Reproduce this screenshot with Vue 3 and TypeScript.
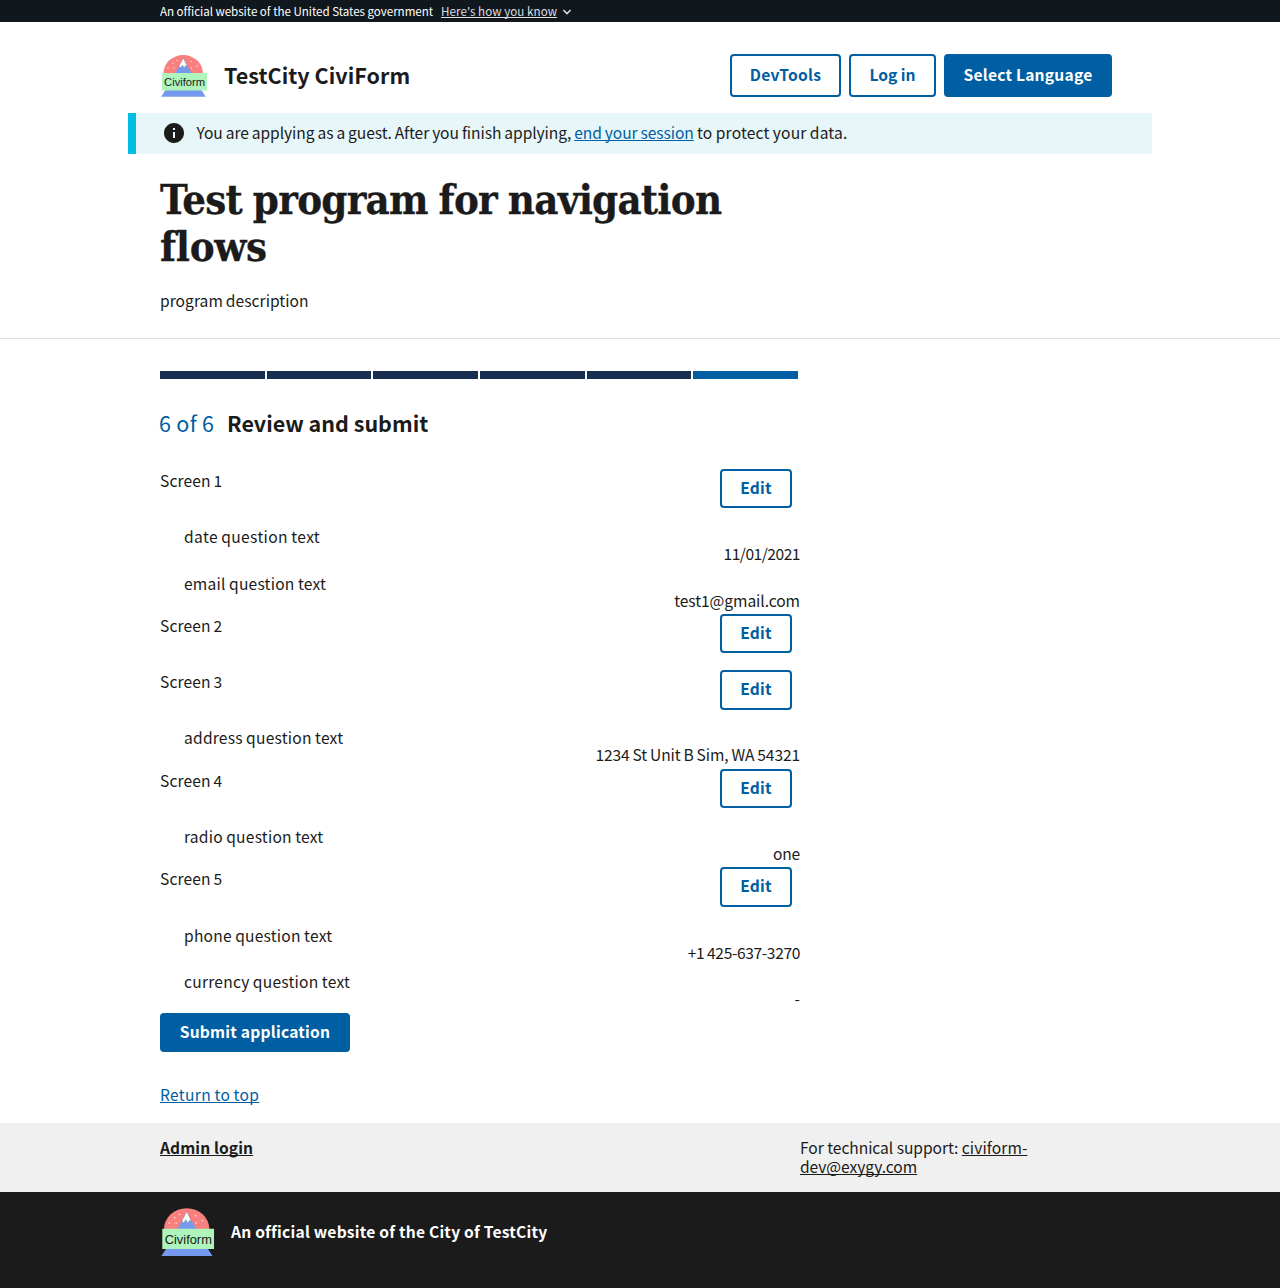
<script setup lang="ts">
import { h } from 'vue'

interface Question {
  text: string
  answer: string
  textTracking: number
  answerTracking: number
}
interface Block {
  name: string
  questions: Question[]
}

const blocks: Block[] = [
  {
    name: 'Screen 1',
    questions: [
      { text: 'date question text', answer: '11/01/2021', textTracking: 0.34, answerTracking: -0.5 },
      { text: 'email question text', answer: 'test1@gmail.com', textTracking: 0.22, answerTracking: -0.07 },
    ],
  },
  { name: 'Screen 2', questions: [] },
  {
    name: 'Screen 3',
    questions: [
      { text: 'address question text', answer: '1234 St Unit B Sim, WA 54321', textTracking: 0.22, answerTracking: -0.12 },
    ],
  },
  {
    name: 'Screen 4',
    questions: [{ text: 'radio question text', answer: 'one', textTracking: 0.22, answerTracking: -0.2 }],
  },
  {
    name: 'Screen 5',
    questions: [
      { text: 'phone question text', answer: '+1 425-637-3270', textTracking: 0.22, answerTracking: -0.37 },
      { text: 'currency question text', answer: '-', textTracking: 0.23, answerTracking: 0 },
    ],
  },
]
const steps = 6

const snow = [
  [12.7, 9.2], [17, 6.5], [8, 14], [14, 14], [31, 7.5], [31.5, 14], [37, 12],
]

// Snow globe mark, shared by the page header and the identifier.
const CiviformLogo = () =>
  h('svg', { viewBox: '0 0 48 44' }, [
    h('path', { d: 'M3.5 19.2A19.7 18.2 0 0 1 42.9 19.2Z', fill: '#fa8080' }),
    h('path', { d: 'M23.2 4.2 31.6 19.2H15.2Z', fill: '#7499ee' }),
    h('path', {
      d: 'M23.2 3.9 27.5 12.6 25.5 11.5 24.2 14.4 22.5 11 20.7 13.8 19 12.2Z',
      fill: '#fff', stroke: '#777', 'stroke-width': 0.35,
    }),
    ...snow.map(([cx, cy]) => h('circle', { cx, cy, r: 0.7, fill: '#ffe0e0' })),
    h('path', { d: 'M5.5 36H41.5L45.7 42.7H1.2Z', fill: '#7499ee' }),
    h('path', { d: 'M2 19H47V36.5H2Z', fill: '#aef4bb' }),
    h('text', {
      x: 4.1, y: 32, textLength: 41, lengthAdjust: 'spacingAndGlyphs',
      'font-family': '"Liberation Sans", sans-serif', 'font-size': 11,
      'font-weight': 400, 'letter-spacing': 0, fill: '#1b1b1b',
    }, 'Civiform'),
  ])
</script>

<template>
  <div class="page">
    <div class="banner">
      <div class="container banner-inner">
        <span class="official">An official website of the United States government</span>
        <a class="how">Here's how you know</a>
        <svg class="chevron" width="10" height="6" viewBox="0 0 10 6"><path d="M1.4 1 5 4.6 8.6 1" fill="none" stroke="#dcdee0" stroke-width="1.5" /></svg>
      </div>
    </div>

    <header class="container header">
      <CiviformLogo class="logo" />
      <span class="brand">TestCity CiviForm</span>
      <nav class="actions">
        <button class="btn outline dev">DevTools</button>
        <button class="btn outline log">Log in</button>
        <button class="btn lang">Select Language</button>
      </nav>
    </header>

    <div class="alert">
      <svg width="24" height="24" viewBox="0 0 24 24"><path fill="#1b1b1b" d="M12 2C6.48 2 2 6.48 2 12s4.48 10 10 10 10-4.48 10-10S17.52 2 12 2zm1 15h-2v-6h2v6zm0-8h-2V7h2v2z" /></svg>
      <p>You are applying as a guest. After you finish applying, <a class="link">end your session</a><span class="protect"> to protect your data.</span></p>
    </div>

    <section class="intro">
      <div class="container">
        <h1>Test program for navigation<br><span class="last">flows</span></h1>
        <p class="description">program description</p>
      </div>
    </section>

    <main class="container main">
      <div class="progress">
        <div v-for="n in steps" :key="n" class="segment" :class="{ current: n === steps }"></div>
      </div>
      <h2><span class="count">6 of 6</span><span class="step">Review and submit</span></h2>

      <section v-for="block in blocks" :key="block.name" class="block">
        <div class="block-head">
          <span class="block-name">{{ block.name }}</span>
          <button class="btn outline edit">Edit</button>
        </div>
        <div v-for="q in block.questions" :key="q.text" class="question">
          <div class="question-text" :style="{ letterSpacing: q.textTracking + 'px' }">{{ q.text }}</div>
          <div class="answer" :style="{ letterSpacing: q.answerTracking + 'px' }">{{ q.answer }}</div>
        </div>
      </section>

      <button class="btn submit">Submit application</button>
      <div class="top-row"><a class="link">Return to top</a></div>
    </main>

    <footer>
      <div class="support">
        <div class="container support-inner">
          <div class="admin"><a>Admin login</a></div>
          <p class="contact">For technical support: <a><span class="mail-start">civiform-</span><br>dev@exygy.com</a></p>
        </div>
      </div>
      <div class="identifier">
        <div class="container identifier-inner">
          <CiviformLogo class="logo-lg" />
          <span>An official website of the City of TestCity</span>
        </div>
      </div>
    </footer>
  </div>
</template>

<style>
body { margin: 0; background: #fff; }
</style>

<style scoped>
* { box-sizing: border-box; }
.page {
  width: 1280px;
  height: 1288px;
  overflow: hidden;
  display: flex;
  flex-direction: column;
  font-family: "Noto Sans CJK SC", "Noto Sans", sans-serif;
  font-size: 15.6px;
  line-height: 17px;
  color: #1b1b1b;
}
p, h1, h2 { margin: 0; }
a { text-decoration: underline; text-decoration-thickness: 1px; text-underline-offset: 1px; text-decoration-skip-ink: none; }
.link { color: #005ea2; }
.container { width: 960px; margin: 0 160px; }

.banner { height: 22px; background: #11181d; color: #fff; font-size: 11.6px; }
.banner-inner { display: flex; align-items: center; height: 22px; white-space: nowrap; }
.official { width: 281px; letter-spacing: -0.04px; }
.how { color: #dcdee0; letter-spacing: 0.06px; }
.chevron { margin: 2px 0 0 5px; }

.header { height: 91px; display: flex; align-items: flex-start; }
.logo { width: 48px; height: 44px; margin-top: 32px; }
.brand { margin: 40px 0 0 16px; font-size: 21.5px; line-height: 25px; font-weight: 700; letter-spacing: 0.04px; white-space: nowrap; }
.actions { display: flex; gap: 8px; margin: 32px 8px 0 auto; }
.btn {
  display: block;
  height: 43px;
  padding: 0 0 3px;
  border: 0;
  border-radius: 4px;
  background: #005ea2;
  color: #fff;
  font: 700 15.6px/17px "Noto Sans CJK SC", "Noto Sans", sans-serif;
  letter-spacing: 0.22px;
  white-space: nowrap;
}
.outline { background: #fff; color: #005ea2; box-shadow: inset 0 0 0 2px #005ea2; }
.dev { width: 111px; letter-spacing: 0.26px; }
.log { width: 87px; letter-spacing: 0; }
.lang { width: 168px; }

.alert {
  width: 1024px;
  height: 41px;
  margin-left: 128px;
  padding: 8px 0 0 26px;
  border-left: 8px solid #00bde3;
  background: #e7f6f8;
  display: flex;
  align-items: flex-start;
  gap: 10.5px;
  word-spacing: -0.4px;
  letter-spacing: -0.08px;
  white-space: nowrap;
}
.alert p { margin-top: 3px; }
.protect { letter-spacing: 0.17px; }

.intro { height: 185px; border-bottom: 1px solid #dcdee0; padding-top: 22px; }
h1 {
  font-family: "DejaVu Serif Condensed", "DejaVu Serif", serif;
  font-stretch: condensed;
  font-weight: 700;
  font-size: 41.5px;
  line-height: 47px;
  letter-spacing: -0.75px;
  word-spacing: -1.4px;
  -webkit-text-stroke: 0.3px #1b1b1b;
  white-space: nowrap;
}
.last { letter-spacing: -0.3px; }
.description { margin-top: 22px; letter-spacing: 0.03px; word-spacing: -0.5px; }

.main { height: 784px; padding-top: 32px; }
.progress { width: 638px; height: 8px; display: flex; gap: 2px; }
.segment { flex: 1; background: #162e51; }
.segment.current { background: #005ea2; }
h2 { display: flex; height: 89.9px; padding-top: 31px; font-size: 21.5px; line-height: 25px; letter-spacing: 0; white-space: nowrap; }
.count { width: 68px; margin-left: -1px; color: #005ea2; font-weight: 400; letter-spacing: 0.3px; }
.block { width: 640px; }
.block-head { height: 56.1px; display: flex; justify-content: space-between; }
.block-name { margin-top: 3px; letter-spacing: 0.1px; word-spacing: -0.5px; }
.edit { width: 72px; height: 39.3px; margin-right: 8px; padding-bottom: 2.7px; }
.question { height: 42.45px; padding-top: 3.125px; word-spacing: -0.4px; }
.question + .question { margin-top: 4.3px; }
.question-text { margin-left: 24px; }
.answer { text-align: right; }
.submit { width: 190px; height: 39.2px; padding-bottom: 1px; }
.top-row { margin-top: 34px; letter-spacing: 0.32px; word-spacing: -0.4px; }

.support { height: 69px; background: #f0f0f0; }
.support-inner { display: flex; padding-top: 15px; line-height: 19px; }
.admin { width: 640px; font-weight: 700; letter-spacing: 0.1px; }
.contact { letter-spacing: -0.06px; word-spacing: 0.1px; white-space: nowrap; }
.mail-start { letter-spacing: 0.08px; }
.identifier { height: 96px; background: #1b1b1b; color: #fff; }
.identifier-inner { display: flex; padding-top: 15px; font-weight: 700; }
.logo-lg { width: 55.2px; height: 50.6px; }
.identifier-inner span { margin: 16px 0 0 15.8px; letter-spacing: 0.22px; white-space: nowrap; }
</style>
